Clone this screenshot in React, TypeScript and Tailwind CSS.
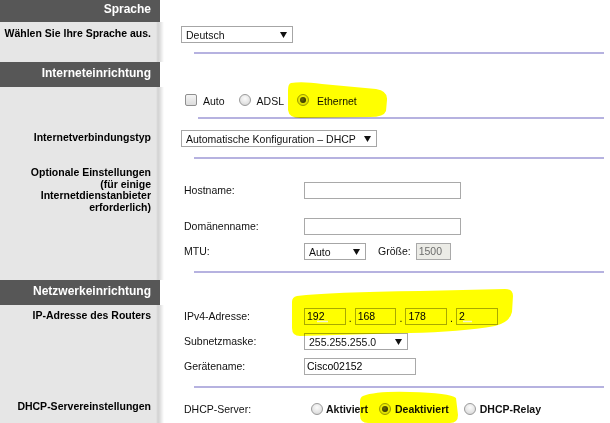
import React from "react";

const Arrow = () => (
  <svg width="7" height="6" viewBox="0 0 7 6" className="shrink-0">
    <polygon points="0,0 7,0 3.5,6" fill="#111" />
  </svg>
);

const Select = ({ text, w }: { text: string; w: string }) => (
  <div className={`flex items-center justify-between h-[17px] border border-[#a6a6a6] bg-white pl-[4px] pr-[5px] leading-[14px] ${w}`}>
    <span className="whitespace-nowrap">{text}</span>
    <Arrow />
  </div>
);

const Radio = ({ checked = false }: { checked?: boolean }) => (
  <span className="flex items-center justify-center w-[12px] h-[12px] rounded-full border border-[#9a9a9a] bg-[radial-gradient(circle_at_50%_35%,#fbfbfb_0%,#e6e6e6_55%,#cfcfcf_100%)] shrink-0">
    {checked && <span className="w-[6px] h-[6px] rounded-full bg-[radial-gradient(circle_at_40%_40%,#6a6a6a,#222)]" />}
  </span>
);

const Checkbox = () => (
  <span className="block w-[12px] h-[12px] rounded-[2px] border border-[#8f8f8f] bg-[linear-gradient(to_bottom,#f4f4f4,#dcdcdc)] shrink-0" />
);

const Hr = () => <div className="h-[2px] bg-[#b6b2e0] ml-[13px] mr-[6px]" />;

const Header = ({ text, h, lh }: { text: string; h: string; lh: string }) => (
  <div className={`flex ${h}`}>
    <div className={`w-[160px] bg-[#575757] text-white font-bold text-[12px] text-right pr-[9px] ${lh}`}>{text}</div>
    <div className="flex-1 bg-white" />
  </div>
);

const LeftLabel = ({ children, pt }: { children: React.ReactNode; pt: string }) => (
  <div className={`w-[160px] shrink-0 text-right pr-[9px] leading-[13px] font-bold text-black ${pt}`}>{children}</div>
);

const FieldLabel = ({ children }: { children: React.ReactNode }) => (
  <span className="w-[120px] shrink-0 leading-[13px]">{children}</span>
);

const Input = ({ w, value = "", disabled = false }: { w: string; value?: string; disabled?: boolean }) => (
  <div
    className={`h-[17px] border border-[#a9a9a9] pl-[2px] leading-[15px] ${w} ${disabled ? "bg-[#ebebe6] text-[#6d6d6d]" : "bg-white text-black"}`}
  >
    {value}
  </div>
);

export default function App() {
  return (
    <div className="relative w-[610px] h-[423px] overflow-hidden font-['Liberation_Sans',Arial,sans-serif] text-[10.5px] text-[#111] bg-[linear-gradient(to_right,#e6e6e6_156px,#d2d2d2_158px,#dedede_160px,#efefef_162px,#ffffff_164px)]">
      <Header text="Sprache" h="h-[22px]" lh="leading-[18px]" />

      {/* Sprache row */}
      <div className="flex h-[40px]">
        <LeftLabel pt="pt-[5px]">Wählen Sie Ihre Sprache aus.</LeftLabel>
        <div className="flex-1 pl-[21px] pt-[4px]">
          <Select text="Deutsch" w="w-[112px]" />
          <div className="mt-[9px]">
            <Hr />
          </div>
        </div>
      </div>

      <Header text="Interneteinrichtung" h="h-[25px]" lh="leading-[23px]" />

      {/* connection type radios */}
      <div className="flex h-[32px]">
        <div className="w-[160px] shrink-0" />
        <div className="flex-1 pl-[25px] pt-[7px]">
          <div className="flex items-start h-[12px] leading-[13px]">
            <Checkbox />
            <span className="ml-[6px] mt-[1px]">Auto</span>
            <span className="ml-[14px]"><Radio /></span>
            <span className="ml-[6px] mt-[1px]">ADSL</span>
            <span className="ml-[13px]"><Radio checked /></span>
            <span className="ml-[8px] mt-[1px]">Ethernet</span>
          </div>
          <div className="mt-[11px]">
            <Hr />
          </div>
        </div>
      </div>

      {/* Internetverbindungstyp */}
      <div className="flex h-[40px]">
        <LeftLabel pt="pt-[12px]">Internetverbindungstyp</LeftLabel>
        <div className="flex-1 pl-[21px] pt-[11px]">
          <Select text="Automatische Konfiguration – DHCP" w="w-[196px]" />
          <div className="mt-[10px]">
            <Hr />
          </div>
        </div>
      </div>

      {/* Optional settings */}
      <div className="flex h-[121px]">
        <div className="w-[160px] shrink-0 text-right pr-[9px] leading-[11.7px] font-bold text-black pt-[8px]">
          Optionale Einstellungen
          <br />
          (für einige
          <br />
          Internetdienstanbieter
          <br />
          erforderlich)
        </div>
        <div className="flex-1 pt-[23px]">
          <div className="pl-[24px]">
            <div className="flex items-center h-[17px]">
              <FieldLabel>Hostname:</FieldLabel>
              <Input w="w-[157px]" />
            </div>
            <div className="flex items-center h-[17px] mt-[19px]">
              <FieldLabel>Domänenname:</FieldLabel>
              <Input w="w-[157px]" />
            </div>
            <div className="flex items-center h-[17px] mt-[8px]">
              <FieldLabel>MTU:</FieldLabel>
              <Select text="Auto" w="w-[62px]" />
              <span className="ml-[12px] leading-[13px]">Größe:</span>
              <div className="ml-[5px]">
                <Input w="w-[35px]" value="1500" disabled />
              </div>
            </div>
          </div>
          <div className="mt-[11px] pl-[21px]">
            <Hr />
          </div>
        </div>
      </div>

      <Header text="Netzwerkeinrichtung" h="h-[25px]" lh="leading-[23px]" />

      {/* Router IP */}
      <div className="flex h-[83px]">
        <LeftLabel pt="pt-[4px]">IP-Adresse des Routers</LeftLabel>
        <div className="flex-1 pt-[3px]">
          <div className="pl-[24px]">
            <div className="flex items-center h-[17px]">
              <FieldLabel>IPv4-Adresse:</FieldLabel>
              <Input w="w-[41.7px]" value="192" />
              <span className="w-[9px] text-center leading-[13px] mt-[3px]">.</span>
              <Input w="w-[41.7px]" value="168" />
              <span className="w-[9px] text-center leading-[13px] mt-[3px]">.</span>
              <Input w="w-[41.7px]" value="178" />
              <span className="w-[9px] text-center leading-[13px] mt-[3px]">.</span>
              <Input w="w-[41.7px]" value="2" />
            </div>
            <div className="flex items-center h-[17px] mt-[8px]">
              <FieldLabel>Subnetzmaske:</FieldLabel>
              <Select text="255.255.255.0" w="w-[104px]" />
            </div>
            <div className="flex items-center h-[17px] mt-[8px]">
              <FieldLabel>Gerätename:</FieldLabel>
              <Input w="w-[112px]" value="Cisco02152" />
            </div>
          </div>
          <div className="mt-[11px] pl-[21px]">
            <Hr />
          </div>
        </div>
      </div>

      {/* DHCP */}
      <div className="flex h-[40px]">
        <LeftLabel pt="pt-[12px]">DHCP-Servereinstellungen</LeftLabel>
        <div className="flex-1 pl-[24px] pt-[15px]">
          <div className="flex items-center h-[12px] leading-[13px]">
            <FieldLabel>DHCP-Server:</FieldLabel>
            <span className="ml-[7px]"><Radio /></span>
            <span className="ml-[3px] font-bold">Aktiviert</span>
            <span className="ml-[11px]"><Radio checked /></span>
            <span className="ml-[4px] font-bold">Deaktiviert</span>
            <span className="ml-[15px]"><Radio /></span>
            <span className="ml-[4px] font-bold">DHCP-Relay</span>
          </div>
        </div>
      </div>

      {/* Highlighter marks */}
      <svg
        className="absolute inset-0 pointer-events-none mix-blend-multiply"
        width="610"
        height="423"
        viewBox="0 0 610 423"
      >
        <path
          d="M291,83 Q302,81 322,84 L376,89 Q388,91 387,100 L386,111 Q384,117 370,117 L300,118 Q289,118 288,110 L288,90 Q288,84 291,83 Z"
          fill="#ffff00"
        />
        <path
          d="M297,296 Q330,292 420,291 L505,289 Q513,289 513,296 L512,312 Q510,322 495,326 Q460,332 410,333 L300,336 Q292,336 292,328 L292,302 Q292,297 297,296 Z"
          fill="#ffff00"
        />
        <path
          d="M363,396 Q376,391 410,392 Q450,393 456,398 L458,415 Q458,423 450,423 L368,423 Q360,423 360,415 L360,402 Q360,397 363,396 Z"
          fill="#ffff00"
        />
      </svg>
      <svg className="absolute inset-0 pointer-events-none" width="610" height="423" viewBox="0 0 610 423">
        <path d="M317,321.5 L328,321.5" stroke="#f4f4d0" strokeWidth="1.5" />
        <path d="M463,321.5 L472,321.5" stroke="#f4f4d0" strokeWidth="1.5" />
      </svg>
    </div>
  );
}
